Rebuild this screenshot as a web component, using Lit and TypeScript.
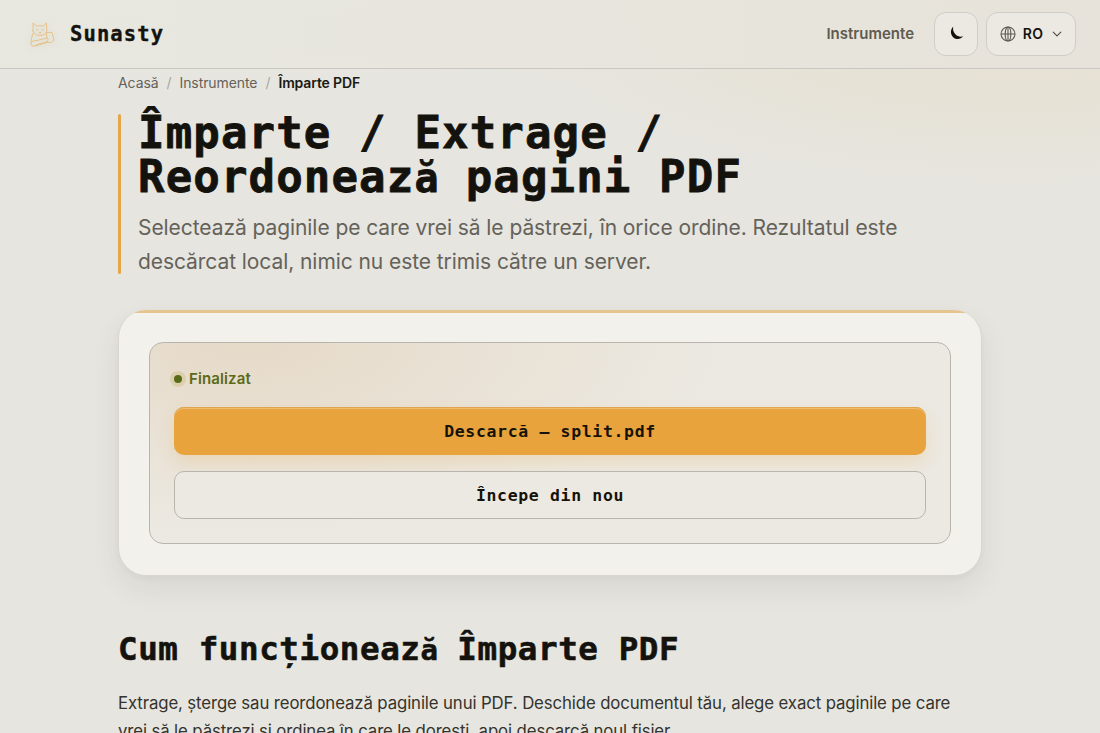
import { LitElement, html, css } from "lit";
import { customElement } from "lit/decorators.js";

@customElement("site-header")
class SiteHeader extends LitElement {
  static styles = css`
    :host { display: block; }
    * { box-sizing: border-box; }
    .bar {
      display: flex; align-items: center; height: 69px; padding: 0 24px 1px 28px;
      border-bottom: 1px solid #c9c8c2;
      background: linear-gradient(90deg, rgba(232,232,224,.7), rgba(231,227,219,.85));
      color: #14120d;
    }
    .logo { width: 28px; height: 30px; opacity: .8; filter: drop-shadow(0 1px 3px rgba(190,160,110,.3)); }
    .brand {
      margin-left: 14px; flex: 1;
      font: 700 20.5px/28px "DejaVu Sans Mono", monospace; letter-spacing: 1.1px;
      -webkit-text-stroke: .35px #14120d;
    }
    .link { font-weight: 600; font-size: 15px; color: #5f5b50; margin-right: 20px; }
    .btn {
      display: flex; align-items: center; justify-content: center; height: 44px;
      border: 1px solid #cfcdc6; border-radius: 12px; background: #ece9e2;
    }
    .moon { width: 44px; margin-right: 8px; padding: 0 0 2px 2px; }
    .lang { width: 90px; font-weight: 600; font-size: 14px; letter-spacing: .3px; }
    .lang span { margin: 0 9px 0 7px; }
    svg { display: block; }
  `;
  render() {
    return html`<header class="bar">
      <svg class="logo" viewBox="0 0 28 30" fill="none" stroke="#e7b876" stroke-width="1" stroke-linejoin="round" stroke-linecap="round">
        <path d="M5 12 L5 4 L9 7.2 Q12 6.4 15 7.2 L18.5 4 L18.8 12 Q18 16 12 16.6 Q6 16 5 12Z" />
        <path d="M8.3 10.8h1.6M13.8 10.8h1.6M11 13l1 .8 1-.8M12 13.8v1M5.2 14 L3.5 19 L3 25 Q3 28 7 27 L19 23.5 M18.3 14 L19 19"/>
        <path d="M3.5 23 Q6 21 9 21.5 L19 19 Q21 20 19.5 22.5 L8 26 M18.7 13.5 L24 13.3 L26 21 Q25 24 19.5 23.5"/>
      </svg>
      <span class="brand">Sunasty</span>
      <span class="link">Instrumente</span>
      <div class="btn moon">
        <svg width="16" height="16" viewBox="0 0 16 16"><path fill="#14120d" d="M4.2 1.8 C1.2 4.5 1.1 9.5 4.4 12.4 C7.3 15 11.8 14.5 14 11.3 C11.4 12.1 8.5 11.5 6.6 9.6 C4.5 7.5 3.6 4.7 4.2 1.8Z"/></svg>
      </div>
      <div class="btn lang">
        <svg width="16" height="16" viewBox="0 0 16 16" fill="none" stroke="#5c594f" stroke-width="1.1"><circle cx="8" cy="8" r="7"/><ellipse cx="8" cy="8" rx="2.8" ry="7"/><path d="M1 8h14M8 1v14"/></svg>
        <span>RO</span>
        <svg width="10" height="10" viewBox="0 0 10 10" fill="none" stroke="#4d4a42" stroke-width="1.1" stroke-linecap="round" stroke-linejoin="round"><path d="M1.2 3.2 5 6.8 8.8 3.2"/></svg>
      </div>
    </header>`;
  }
}

@customElement("result-card")
class ResultCard extends LitElement {
  static styles = css`
    :host { display: block; }
    * { box-sizing: border-box; }
    .card {
      border: 1px solid #d8d6ce; border-top: 0; border-radius: 28px; overflow: hidden; height: 266px;
      background: linear-gradient(#e6c48f, #e6c48f) top / 100% 3px no-repeat, #f2f1ec;
      padding: 32px 30px 31px;
      box-shadow: 0 12px 28px rgba(70,65,40,.09), 0 2px 6px rgba(70,65,40,.03);
    }
    .panel {
      height: 202px; border: 1px solid #b7b5ae; border-radius: 14px; padding: 24px;
      background: radial-gradient(ellipse 480px 190px at 12% 0, #e6dac8 0, rgba(230,218,200,.5) 50%, rgba(230,218,200,0) 100%), #ece9e2;
    }
    .status { display: flex; align-items: center; height: 24px; font-weight: 600; font-size: 15px; color: #5a6b18; }
    .status span { margin-top: -2px; letter-spacing: .12px; }
    .dot { width: 8px; height: 8px; border-radius: 50%; background: #5a6b18; box-shadow: 0 0 0 4px #dccfae; margin-right: 7px; }
    .button {
      display: flex; align-items: center; justify-content: center; height: 48px; border-radius: 10px; padding-top: 1px;
      font: 700 16.5px/24px "DejaVu Sans Mono", monospace; letter-spacing: .65px; color: #171207;
    }
    .primary { margin-top: 16px; background: #e8a33d; box-shadow: inset 0 1px 0 #dfa44d, inset 0 2px 0 #efbd72, 0 8px 18px rgba(232,163,61,.2); }
    .ghost { margin-top: 16px; border: 1px solid #b7b5ae; background: #ece9e2; }
  `;
  render() {
    return html`<section class="card"><div class="panel">
      <div class="status"><i class="dot"></i><span>Finalizat</span></div>
      <div class="button primary">Descarcă — split.pdf</div>
      <div class="button ghost">Începe din nou</div>
    </div></section>`;
  }
}

@customElement("app-root")
class AppRoot extends LitElement {
  static styles = css`
    :host {
      display: block; height: 733px; overflow: hidden; font-family: Inter, sans-serif; color: #14120d;
      background: radial-gradient(ellipse 560px 200px at 93% 0, #e7e1d2 0, rgba(231,225,210,.7) 50%, rgba(231,225,210,0) 100%),
        radial-gradient(ellipse 700px 100px at 20% 0, #e8e8df, rgba(232,232,223,0)), #e6e5e0;
    }
    * { box-sizing: border-box; }
    main { width: 864px; margin: 0 auto; }
    .crumbs { display: flex; align-items: center; gap: 8px; height: 26px; font-size: 14px; letter-spacing: -.08px; color: #65625a; }
    .sep { color: #aaa89f; }
    .current { color: #1b1913; font-weight: 600; letter-spacing: -.15px; }
    .hero { display: flex; gap: 17px; margin-top: 15px; }
    .rule { width: 3px; margin: 4px 0 5px; border-radius: 2px; background: #e5a64a; }
    h1, h2, p { margin: 0; }
    h1 { padding-top: 1px; font: 700 44px/44px "DejaVu Sans Mono", monospace; letter-spacing: 1.15px; white-space: nowrap; -webkit-text-stroke: .8px #14120d; }
    h1 span { font-size: 40px; line-height: 1; letter-spacing: -.5px; }
    .lead { margin-top: 12px; font-size: 21px; line-height: 34px; letter-spacing: -.07px; color: #65625a; white-space: nowrap; }
    result-card { margin-top: 31px; }
    h2 { margin-top: 51px; font: 700 32.5px/44px "DejaVu Sans Mono", monospace; letter-spacing: .6px; white-space: nowrap; -webkit-text-stroke: .6px #14120d; }
    h2 span { font-size: 29px; line-height: 1; letter-spacing: -.8px; }
    .body { margin-top: 18px; font-size: 16.8px; line-height: 28px; letter-spacing: -.118px; color: #35332c; white-space: nowrap; }
  `;
  render() {
    return html`<site-header></site-header>
      <main>
        <nav class="crumbs"><span>Acasă</span><span class="sep">/</span><span>Instrumente</span><span class="sep">/</span><span class="current">Împarte PDF</span></nav>
        <div class="hero"><div class="rule"></div><div>
          <h1>Împarte / Extrage /<br />Reordoneaz<span>ă</span> pagini PDF</h1>
          <p class="lead">Selectează paginile pe care vrei să le păstrezi, în orice ordine. Rezultatul este<br />descărcat local, nimic nu este trimis către un server.</p>
        </div></div>
        <result-card></result-card>
        <h2>Cum funcționeaz<span>ă</span> Împarte PDF</h2>
        <p class="body">Extrage, șterge sau reordonează paginile unui PDF. Deschide documentul tău, alege exact paginile pe care<br />vrei să le păstrezi și ordinea în care le dorești, apoi descarcă noul fișier.</p>
      </main>`;
  }
}
